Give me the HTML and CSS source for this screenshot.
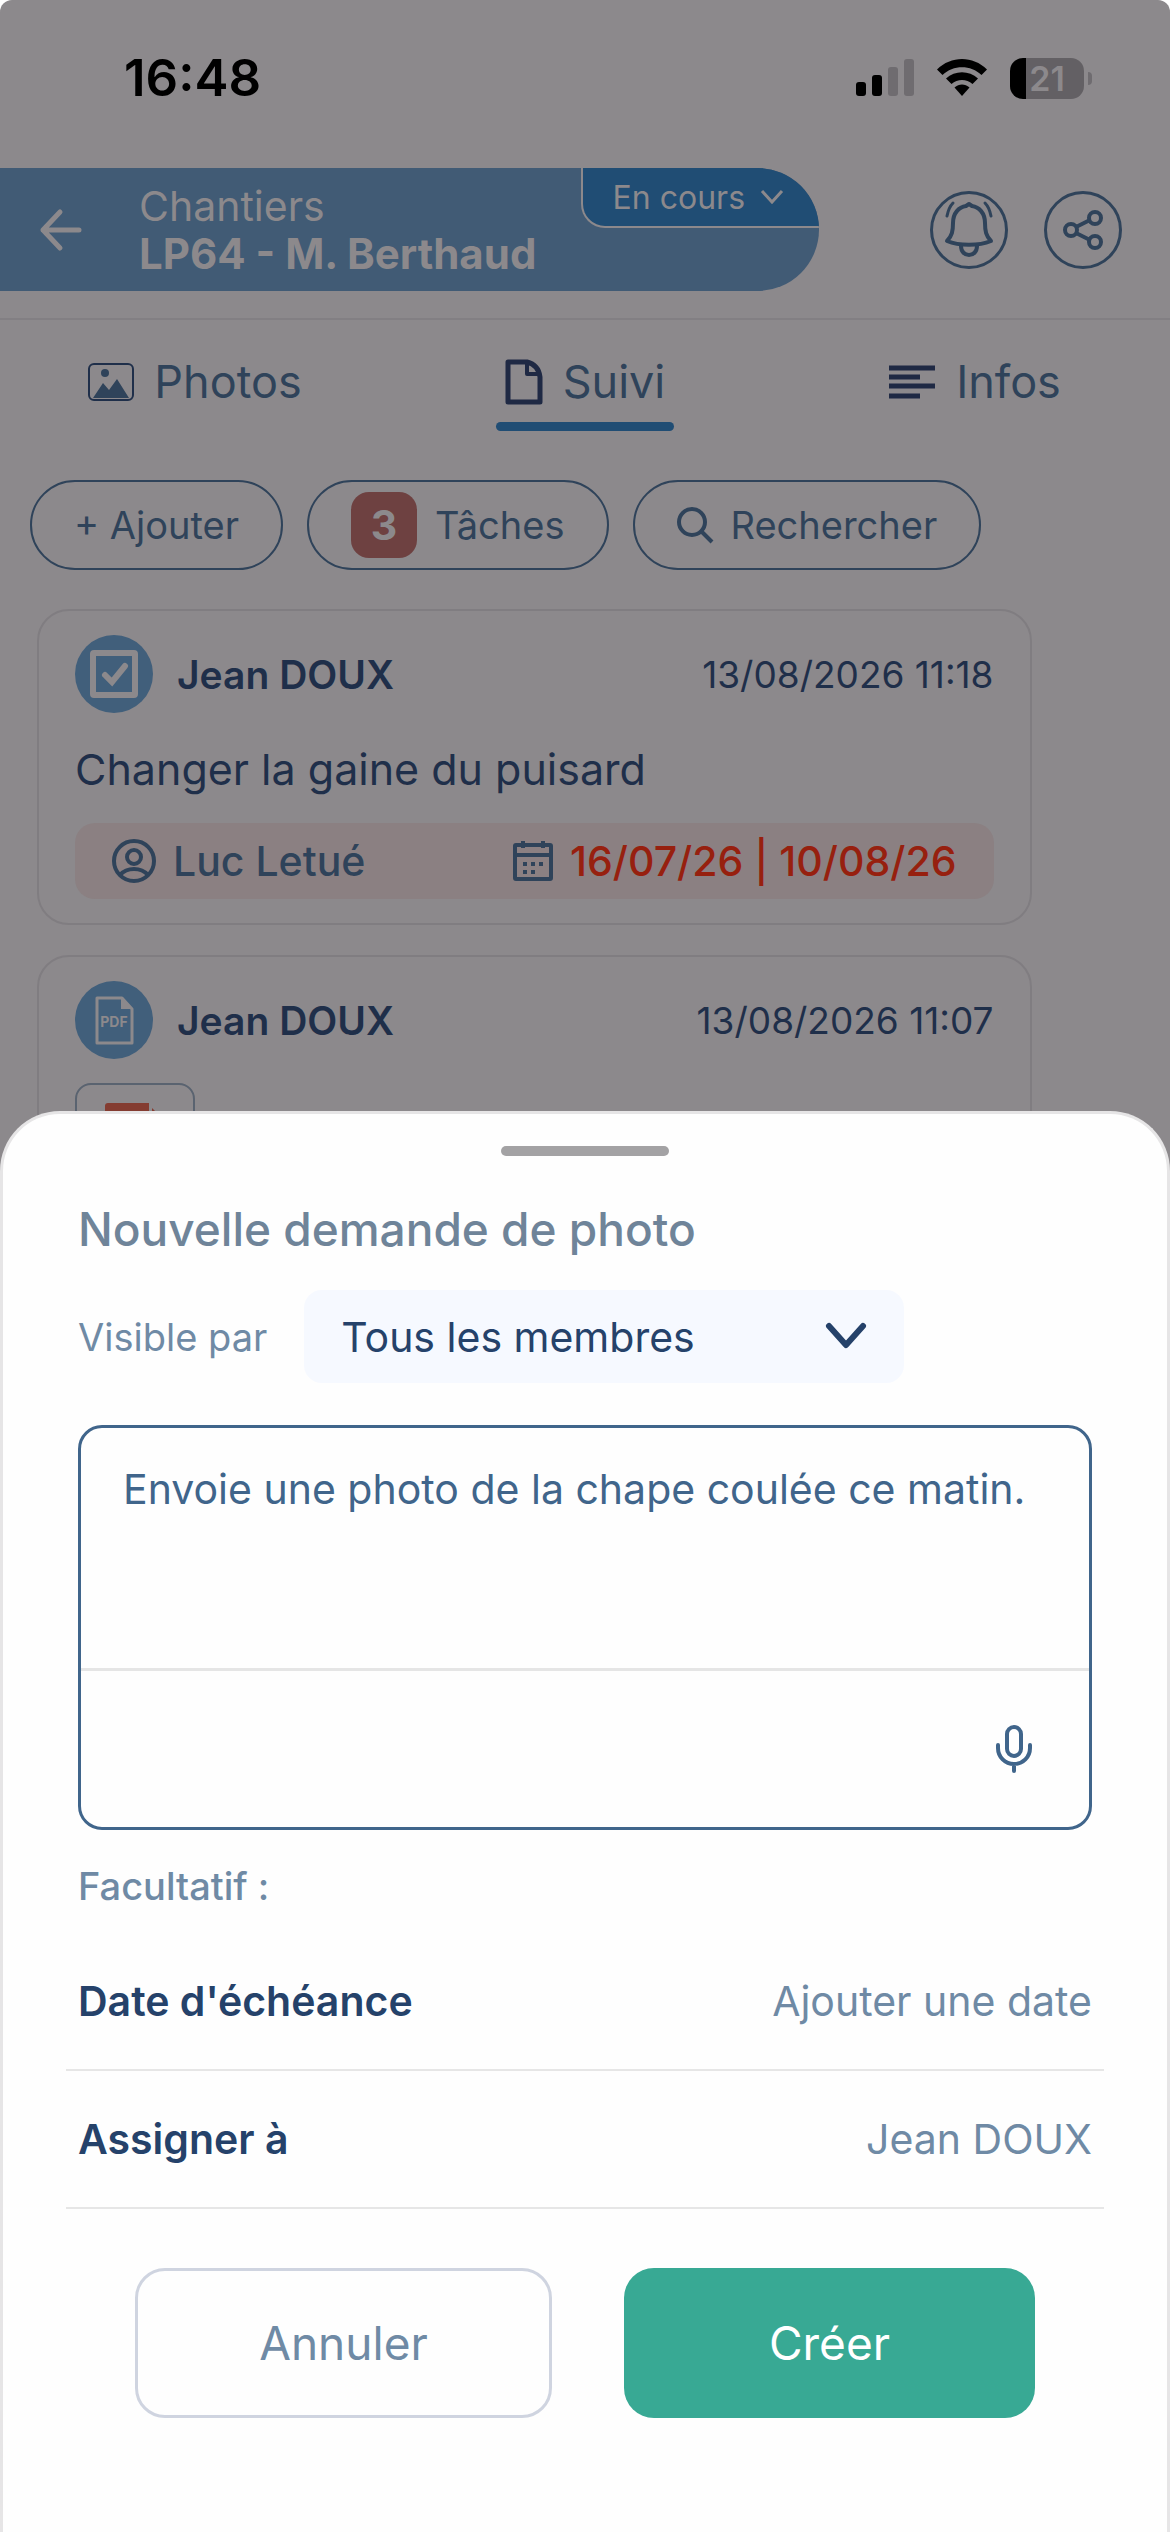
FILE: index.html
```html
<!DOCTYPE html>
<html lang="fr">
<head>
  <meta charset="UTF-8" />
  <meta name="viewport" content="width=device-width, initial-scale=1.0"/>
  <title>Chantiers - LP64 - M. Berthaud</title>
  <link rel="stylesheet" href="styles.css">
</head>
<body>
  <div class="screen">
    <div class="status-bar">
      <span class="clock">16:48</span>
      <div class="status-icons">
        <svg width="58" height="38" viewBox="0 0 58 38">
          <rect x="0" y="23" width="10" height="14" rx="3"/>
          <rect x="16" y="16" width="10" height="21" rx="3"/>
          <rect x="32" y="8" width="10" height="29" rx="3" fill="#6f6c70"/>
          <rect x="48" y="0" width="10" height="37" rx="3" fill="#6f6c70"/>
        </svg>
        <svg width="52" height="38" viewBox="0 0 52 38">
          <path d="M1 10.500C15-3.500 37-3.500 51 10.500L45.500 16C35 5.500 17 5.500 6.500 16Z"/>
          <path d="M10 19.500C19 11 33 11 42 19.500L36.500 25C30.500 19.500 21.500 19.500 15.500 25Z"/>
          <path d="M18.500 28.500C23 24.500 29 24.500 33.500 28.500L26 37Z"/>
        </svg>
        <div class="battery">
          <span class="battery-level">21</span>
        </div>
      </div>
    </div>

    <header class="header">
      <div class="site">
        <button class="back-btn" aria-label="Retour">
          <svg width="44" height="44" viewBox="0 0 44 44" fill="none" stroke="currentColor" stroke-width="5" stroke-linecap="round" stroke-linejoin="round">
            <path d="M40 22H4M21 4L4 22l17 18"/>
          </svg>
        </button>
        <div class="site-name">
          <span>Chantiers</span>
          <strong>LP64 - M. Berthaud</strong>
        </div>
        <button class="site-status">
          En cours
          <svg width="22" height="14" viewBox="0 0 22 14" fill="none" stroke="currentColor" stroke-width="3">
            <path d="M1 1l10 11L21 1"/>
          </svg>
        </button>
      </div>
      <div class="header-actions">
        <button class="round-btn" aria-label="Notifications">
          <svg width="48" height="54" viewBox="0 0 48 54" fill="none" stroke="currentColor" stroke-width="4" stroke-linejoin="round" stroke-linecap="round">
            <path d="M2 38C7 33 8 28 8 20C8 10 14 4 21 3L24 1L27 3C34 4 40 10 40 20C40 28 41 33 46 38C34 43 14 43 2 38Z"/>
            <path d="M16 43C16 55 32 55 32 43"/>
            <path d="M8 0C4 4 3 8 2 13M40 0C44 4 45 8 46 13" stroke-width="3"/>
          </svg>
        </button>
        <button class="round-btn" aria-label="Partager">
          <svg width="40" height="40" viewBox="0 0 40 40" fill="none" stroke="currentColor" stroke-width="4">
            <circle cx="8" cy="20" r="6"/>
            <circle cx="32" cy="8" r="6"/>
            <circle cx="32" cy="32" r="6"/>
            <path d="M13 17l14-7M13 23l14 7"/>
          </svg>
        </button>
      </div>
    </header>

    <nav class="tabs">
      <a class="tab" href="#photos">
        <svg width="46" height="38" viewBox="0 0 46 38" fill="#2f435a">
          <rect x="1" y="1" width="44" height="36" rx="5" fill="none" stroke="#1f2f4a" stroke-width="2"/>
          <circle cx="17" cy="10" r="4"/>
          <path d="M5 35L15 20l6 7 8-11 12 19z"/>
        </svg>
        Photos
      </a>
      <a class="tab active" href="#suivi">
        <svg width="38" height="46" viewBox="0 0 38 46" fill="none" stroke="#1f2944" stroke-width="5" stroke-linejoin="round">
          <path d="M4 3H22C30 5 34 10 35 18V43H3V3Z"/>
          <path d="M22 4V15H34" stroke-width="4"/>
        </svg>
        <span>Suivi</span>
      </a>
      <a class="tab" href="#infos">
        <svg width="47" height="34" viewBox="0 0 47 34" stroke="#1f2944" stroke-width="5">
          <path d="M0 3H46M0 12H31M0 21H46M0 31H31"/>
        </svg>
        Infos
      </a>
    </nav>

    <div class="toolbar">
      <button class="pill">+ Ajouter</button>
      <button class="pill"><span class="count">3</span>Tâches</button>
      <button class="pill">
        <svg width="36" height="36" viewBox="0 0 36 36" fill="none" stroke="currentColor" stroke-width="4">
          <circle cx="15" cy="15" r="13"/>
          <path d="M24 24l11 11"/>
        </svg>
        Rechercher
      </button>
    </div>

    <main class="feed">
      <article class="card">
        <div class="card-header">
          <svg width="78" height="78" viewBox="0 0 78 78">
            <circle cx="39" cy="39" r="39" fill="#415f7b"/>
            <rect x="18" y="18" width="42" height="42" rx="1" fill="none" stroke="#8c898c" stroke-width="6"/>
            <path d="M30 40l7 7 13-16" fill="none" stroke="#8c898c" stroke-width="6" stroke-linecap="round"/>
          </svg>
          <span class="author">Jean DOUX</span>
          <time>13/08/2026 11:18</time>
        </div>
        <p>Changer la gaine du puisard</p>
        <div class="task-info">
          <svg width="44" height="44" viewBox="0 0 44 44" fill="none" stroke="currentColor" stroke-width="4">
            <circle cx="22" cy="22" r="20"/>
            <circle cx="22" cy="18" r="7"/>
            <path d="M8 36C15 28 29 28 36 36"/>
          </svg>
          <span class="assignee">Luc Letué</span>
          <svg width="40" height="42" viewBox="0 0 40 42" fill="none" stroke="currentColor" stroke-width="4">
            <rect x="2" y="5" width="36" height="34" rx="1"/>
            <path d="M2 15H38M10 1V8M30 1V8"/>
            <path d="M10 24h4m4 0h4m4 0h4M10 32h4m4 0h4"/>
          </svg>
          <span class="due">16/07/26 | 10/08/26</span>
        </div>
      </article>

      <article class="card">
        <div class="card-header">
          <svg width="78" height="78" viewBox="0 0 78 78">
            <circle cx="39" cy="39" r="39" fill="#415f7b"/>
            <path d="M22 17H47L57 28V62H22Z" fill="none" stroke="#8c898c" stroke-width="3" stroke-linejoin="round"/>
            <path d="M46 16V28H58Z" fill="#8c898c"/>
            <text x="39" y="46" text-anchor="middle" class="pdf-label">PDF</text>
          </svg>
          <span class="author">Jean DOUX</span>
          <time>13/08/2026 11:07</time>
        </div>
        <a class="attachment" href="#document" aria-label="Document PDF">
          <svg width="62" height="80" viewBox="0 0 62 80" fill="#843c31">
            <path d="M3 0H44V18H62V77a3 3 0 0 1-3 3H3a3 3 0 0 1-3-3V3a3 3 0 0 1 3-3Z"/>
            <path d="M47 5V15H57Z"/>
          </svg>
        </a>
      </article>
    </main>
  </div>

  <form class="sheet">
    <div class="handle"></div>
    <h1>Nouvelle demande de photo</h1>

    <div class="visibility">
      <label for="visibleBy">Visible par</label>
      <div class="select-wrap">
        <select id="visibleBy">
          <option>Tous les membres</option>
        </select>
        <svg width="42" height="28" viewBox="0 0 42 28" fill="none" stroke="#25426a" stroke-width="6" stroke-linecap="round" stroke-linejoin="round">
          <path d="M4 4l17 19L38 4"/>
        </svg>
      </div>
    </div>

    <div class="message">
      <textarea aria-label="Message">Envoie une photo de la chape coulée ce matin.</textarea>
      <div class="message-tools">
        <button type="button" class="mic-btn" aria-label="Dicter">
          <svg width="38" height="50" viewBox="0 0 38 50" fill="none" stroke="currentColor" stroke-width="4" stroke-linecap="round">
            <rect x="12" y="3" width="14" height="29" rx="7"/>
            <path d="M3 21V24C3 33 10 40 19 40S35 33 35 24V21M19 40V47"/>
          </svg>
        </button>
      </div>
    </div>

    <p class="optional">Facultatif :</p>
    <button type="button" class="row"><strong>Date d'échéance</strong><span>Ajouter une date</span></button>
    <button type="button" class="row"><strong>Assigner à</strong><span>Jean DOUX</span></button>

    <div class="actions">
      <button type="button" class="cancel-btn">Annuler</button>
      <button type="button" class="create-btn">Créer</button>
    </div>
  </form>
</body>
</html>
```

FILE: styles.css
```css
* {
  box-sizing: border-box;
}

body {
  margin: 0;
  background: #fff;
  font-family: Inter, "Liberation Sans", sans-serif;
}

button, select, textarea {
  margin: 0;
  padding: 0;
  border: none;
  background: none;
  font: inherit;
  color: inherit;
  cursor: pointer;
}

svg {
  display: block;
  flex: none;
  overflow: visible;
}

a {
  color: inherit;
  text-decoration: none;
}

.screen {
  height: 100vh;
  overflow: hidden;
  background: #8c898c;
  color: #2f435a;
  border-radius: 12px 12px 0 0;
}

.status-bar {
  display: flex;
  justify-content: space-between;
  align-items: center;
  padding: 48px 86px 60px 124px;
}

.clock {
  font-size: 51px;
  line-height: 60px;
  font-weight: 600;
  color: #000;
}

.status-icons {
  display: flex;
  align-items: center;
  gap: 22px;
}

.battery {
  position: relative;
  width: 74px;
  height: 41px;
  border-radius: 13px;
  background: linear-gradient(to right, #000 16px, #636064 16px);
  text-align: center;
}

.battery::after {
  content: "";
  position: absolute;
  left: 78px;
  top: 14px;
  width: 4px;
  height: 13px;
  border-radius: 0 4px 4px 0;
  background: #6f6c70;
}

.battery-level {
  font-size: 34px;
  line-height: 41px;
  font-weight: 600;
  color: #8c898c;
}

/* header */
.header {
  display: flex;
  justify-content: space-between;
  align-items: flex-start;
  padding: 0 48px 27px 0;
  border-bottom: 2px solid #827f83;
}

.site {
  position: relative;
  display: flex;
  align-items: center;
  width: 73%;
  height: 123px;
  padding-left: 39px;
  gap: 56px;
  overflow: hidden;
  border-radius: 0 62px 62px 0;
  background: #415b75;
  color: #8c898c;
}

.site-name {
  display: flex;
  flex-direction: column;
  font-size: 41px;
  line-height: 48px;
}

.site-name strong {
  font-size: 42px;
}

.site-status {
  position: absolute;
  top: 0;
  right: 0;
  display: flex;
  align-items: center;
  gap: 16px;
  height: 60px;
  padding: 0 36px 0 30px;
  border-left: 2px solid #8c898c;
  border-bottom: 2px solid #8c898c;
  border-bottom-left-radius: 24px;
  background: #204d74;
  font-size: 32px;
}

.header-actions {
  display: flex;
  gap: 36px;
  padding-top: 23px;
}

.round-btn {
  display: flex;
  justify-content: center;
  align-items: center;
  width: 78px;
  height: 78px;
  border: 3px solid #2f435a;
  border-radius: 50%;
}

/* tabs */
.tabs {
  display: grid;
  grid-template-columns: 1fr 1fr 1fr;
  justify-items: center;
  padding-top: 30px;
}

.tab {
  position: relative;
  display: flex;
  align-items: center;
  gap: 20px;
  padding: 4px 9px 22px;
  font-size: 45px;
  line-height: 56px;
}

.tab.active::after {
  content: "";
  position: absolute;
  left: 0;
  right: 0;
  bottom: 1px;
  height: 9px;
  border-radius: 5px;
  background: #204d74;
}

/* toolbar */
.toolbar {
  display: flex;
  gap: 24px;
  padding: 48px 30px 39px;
}

.pill {
  display: flex;
  justify-content: center;
  align-items: center;
  gap: 18px;
  height: 90px;
  padding: 0 42px;
  border: 2px solid #2f435a;
  border-radius: 45px;
  font-size: 38px;
}

.count {
  width: 66px;
  line-height: 66px;
  border-radius: 18px;
  background: #6e4141;
  color: #8c898c;
  font-size: 41px;
  font-weight: 700;
}

/* feed */
.feed {
  display: flex;
  flex-direction: column;
  gap: 30px;
  width: 85%;
  margin-left: 37px;
}

.card {
  padding: 24px 36px;
  border: 2px solid #807d81;
  border-radius: 32px;
  color: #1f2f4a;
}

.card-header {
  display: flex;
  align-items: center;
}

.author {
  flex: 1;
  padding-left: 24px;
  font-size: 39px;
  font-weight: 600;
}

.card time {
  font-size: 37px;
}

.pdf-label {
  font-size: 14px;
  font-weight: 700;
  fill: #8c898c;
}

.card p {
  margin: 28px 0 26px;
  font-size: 43px;
  line-height: 56px;
}

.task-info {
  display: flex;
  align-items: center;
  gap: 17px;
  height: 76px;
  padding: 0 37px;
  border-radius: 20px;
  background: #8b8082;
  color: #2f435a;
  font-size: 41px;
  font-weight: 500;
}

.assignee {
  flex: 1;
}

.due {
  color: #97200f;
}

.attachment {
  display: block;
  width: 120px;
  height: 120px;
  margin-top: 24px;
  padding: 18px 28px;
  border: 2px solid #5a6370;
  border-radius: 16px;
}

/* bottom sheet */
.sheet {
  position: fixed;
  left: 0;
  right: 0;
  bottom: 0;
  padding: 32px 75px 114px;
  border: 3px solid #e6e5e6;
  border-bottom: none;
  border-radius: 60px 60px 0 0;
  background: #fefefe;
  color: #6f8aa5;
}

.handle {
  width: 168px;
  height: 10px;
  margin: 0 auto;
  border-radius: 5px;
  background: #a3a2a4;
}

.sheet h1 {
  margin: 45px 0 33px;
  font-size: 46px;
  line-height: 56px;
  font-weight: 500;
  color: #6f8499;
}

.visibility {
  display: flex;
  align-items: center;
  gap: 37px;
  font-size: 38px;
}

.select-wrap {
  position: relative;
  width: 600px;
}

.select-wrap select {
  appearance: none;
  width: 100%;
  height: 93px;
  padding: 0 37px;
  border-radius: 18px;
  background: #f6f9ff;
  color: #25426a;
  font-size: 41px;
}

.select-wrap svg {
  position: absolute;
  right: 37px;
  top: 32px;
  pointer-events: none;
}

.message {
  margin-top: 42px;
  border: 3px solid #40658b;
  border-radius: 24px;
  color: #40658b;
}

.message textarea {
  display: block;
  width: 100%;
  height: 240px;
  padding: 37px 30px 37px 42px;
  resize: none;
  outline: none;
  font-size: 41px;
  line-height: 48px;
  cursor: text;
}

.message-tools {
  display: flex;
  justify-content: flex-end;
  align-items: center;
  height: 159px;
  padding-right: 56px;
  border-top: 3px solid #e5e5e5;
}

.optional {
  margin: 33px 0 24px;
  font-size: 38px;
  line-height: 46px;
  font-weight: 500;
}

.row {
  display: flex;
  justify-content: space-between;
  align-items: center;
  width: calc(100% + 24px);
  height: 138px;
  margin: 0 -12px;
  padding: 0 12px;
  border-bottom: 2px solid #e6e6e6;
  font-size: 41px;
}

.row strong {
  font-weight: 600;
  color: #25426a;
}

.actions {
  display: flex;
  gap: 72px;
  margin: 59px 57px 0;
}

.actions button {
  flex: 1;
  height: 150px;
  border-radius: 30px;
  font-size: 46px;
}

.actions .cancel-btn {
  border: 3px solid #cfd4e0;
}

.actions .create-btn {
  background: #38a994;
  color: #fff;
}
```
